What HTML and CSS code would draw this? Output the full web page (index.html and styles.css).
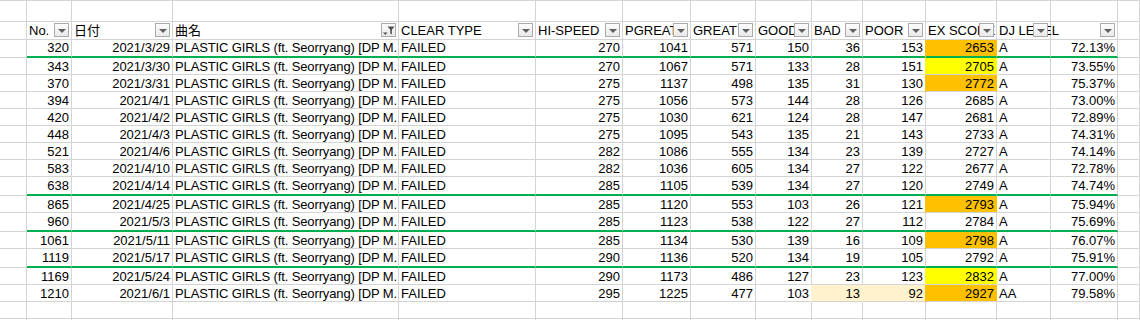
FILE: index.html
```html
<!DOCTYPE html>
<html lang="ja">
<head>
<meta charset="utf-8">
<title>PLASTIC GIRLS 記録</title>
<link rel="stylesheet" href="styles.css">
</head>
<body>
<div class="sheet">
  <div class="row top"><div class="c"></div><div class="c"></div><div class="c"></div><div class="c"></div><div class="c"></div><div class="c"></div><div class="c"></div><div class="c"></div><div class="c"></div><div class="c"></div><div class="c"></div><div class="c"></div><div class="c"></div><div class="c"></div><div class="c"></div></div>
  <div class="row head">
    <div class="c"></div>
    <div class="c h">No.<span class="fb"></span></div>
    <div class="c h">日付<span class="fb"></span></div>
    <div class="c h">曲名<span class="fb on"><svg width="13" height="12" viewBox="0 0 13 12"><path d="M1 8.5h4.5L3.25 11z"/><path d="M5.5 2.5h7l-2.6 3.2v4.8L8.3 9.4V5.7z"/></svg></span></div>
    <div class="c h">CLEAR TYPE<span class="fb"></span></div>
    <div class="c h">HI-SPEED<span class="fb"></span></div>
    <div class="c h">PGREAT<span class="fb"></span></div>
    <div class="c h">GREAT<span class="fb"></span></div>
    <div class="c h">GOOD<span class="fb"></span></div>
    <div class="c h">BAD<span class="fb"></span></div>
    <div class="c h">POOR<span class="fb"></span></div>
    <div class="c h">EX SCORE<span class="fb"></span></div>
    <div class="c h over">DJ LEVEL<span class="fb"></span></div>
    <div class="c h"><span class="fb"></span></div>
    <div class="c"></div>
  </div>

  <div class="row g"><div class="c"></div><div class="c n">320</div><div class="c n">2021/3/29</div><div class="c tt">PLASTIC GIRLS (ft. Seorryang) [DP M.</div><div class="c">FAILED</div><div class="c n">270</div><div class="c n">1041</div><div class="c n">571</div><div class="c n">150</div><div class="c n">36</div><div class="c n">153</div><div class="c n or">2653</div><div class="c">A</div><div class="c n">72.13%</div><div class="c"></div></div>
  <div class="row"><div class="c"></div><div class="c n">343</div><div class="c n">2021/3/30</div><div class="c tt">PLASTIC GIRLS (ft. Seorryang) [DP M.</div><div class="c">FAILED</div><div class="c n">270</div><div class="c n">1067</div><div class="c n">571</div><div class="c n">133</div><div class="c n">28</div><div class="c n">151</div><div class="c n ye">2705</div><div class="c">A</div><div class="c n">73.55%</div><div class="c"></div></div>
  <div class="row"><div class="c"></div><div class="c n">370</div><div class="c n">2021/3/31</div><div class="c tt">PLASTIC GIRLS (ft. Seorryang) [DP M.</div><div class="c">FAILED</div><div class="c n">275</div><div class="c n">1137</div><div class="c n">498</div><div class="c n">135</div><div class="c n">31</div><div class="c n">130</div><div class="c n or">2772</div><div class="c">A</div><div class="c n">75.37%</div><div class="c"></div></div>
  <div class="row"><div class="c"></div><div class="c n">394</div><div class="c n">2021/4/1</div><div class="c tt">PLASTIC GIRLS (ft. Seorryang) [DP M.</div><div class="c">FAILED</div><div class="c n">275</div><div class="c n">1056</div><div class="c n">573</div><div class="c n">144</div><div class="c n">28</div><div class="c n">126</div><div class="c n">2685</div><div class="c">A</div><div class="c n">73.00%</div><div class="c"></div></div>
  <div class="row"><div class="c"></div><div class="c n">420</div><div class="c n">2021/4/2</div><div class="c tt">PLASTIC GIRLS (ft. Seorryang) [DP M.</div><div class="c">FAILED</div><div class="c n">275</div><div class="c n">1030</div><div class="c n">621</div><div class="c n">124</div><div class="c n">28</div><div class="c n">147</div><div class="c n">2681</div><div class="c">A</div><div class="c n">72.89%</div><div class="c"></div></div>
  <div class="row"><div class="c"></div><div class="c n">448</div><div class="c n">2021/4/3</div><div class="c tt">PLASTIC GIRLS (ft. Seorryang) [DP M.</div><div class="c">FAILED</div><div class="c n">275</div><div class="c n">1095</div><div class="c n">543</div><div class="c n">135</div><div class="c n">21</div><div class="c n">143</div><div class="c n">2733</div><div class="c">A</div><div class="c n">74.31%</div><div class="c"></div></div>
  <div class="row"><div class="c"></div><div class="c n">521</div><div class="c n">2021/4/6</div><div class="c tt">PLASTIC GIRLS (ft. Seorryang) [DP M.</div><div class="c">FAILED</div><div class="c n">282</div><div class="c n">1086</div><div class="c n">555</div><div class="c n">134</div><div class="c n">23</div><div class="c n">139</div><div class="c n">2727</div><div class="c">A</div><div class="c n">74.14%</div><div class="c"></div></div>
  <div class="row"><div class="c"></div><div class="c n">583</div><div class="c n">2021/4/10</div><div class="c tt">PLASTIC GIRLS (ft. Seorryang) [DP M.</div><div class="c">FAILED</div><div class="c n">282</div><div class="c n">1036</div><div class="c n">605</div><div class="c n">134</div><div class="c n">27</div><div class="c n">122</div><div class="c n">2677</div><div class="c">A</div><div class="c n">72.78%</div><div class="c"></div></div>
  <div class="row g"><div class="c"></div><div class="c n">638</div><div class="c n">2021/4/14</div><div class="c tt">PLASTIC GIRLS (ft. Seorryang) [DP M.</div><div class="c">FAILED</div><div class="c n">285</div><div class="c n">1105</div><div class="c n">539</div><div class="c n">134</div><div class="c n">27</div><div class="c n">120</div><div class="c n">2749</div><div class="c">A</div><div class="c n">74.74%</div><div class="c"></div></div>
  <div class="row"><div class="c"></div><div class="c n">865</div><div class="c n">2021/4/25</div><div class="c tt">PLASTIC GIRLS (ft. Seorryang) [DP M.</div><div class="c">FAILED</div><div class="c n">285</div><div class="c n">1120</div><div class="c n">553</div><div class="c n">103</div><div class="c n">26</div><div class="c n">121</div><div class="c n or">2793</div><div class="c">A</div><div class="c n">75.94%</div><div class="c"></div></div>
  <div class="row g"><div class="c"></div><div class="c n">960</div><div class="c n">2021/5/3</div><div class="c tt">PLASTIC GIRLS (ft. Seorryang) [DP M.</div><div class="c">FAILED</div><div class="c n">285</div><div class="c n">1123</div><div class="c n">538</div><div class="c n">122</div><div class="c n">27</div><div class="c n">112</div><div class="c n">2784</div><div class="c">A</div><div class="c n">75.69%</div><div class="c"></div></div>
  <div class="row"><div class="c"></div><div class="c n">1061</div><div class="c n">2021/5/11</div><div class="c tt">PLASTIC GIRLS (ft. Seorryang) [DP M.</div><div class="c">FAILED</div><div class="c n">285</div><div class="c n">1134</div><div class="c n">530</div><div class="c n">139</div><div class="c n">16</div><div class="c n">109</div><div class="c n or">2798</div><div class="c">A</div><div class="c n">76.07%</div><div class="c"></div></div>
  <div class="row g"><div class="c"></div><div class="c n">1119</div><div class="c n">2021/5/17</div><div class="c tt">PLASTIC GIRLS (ft. Seorryang) [DP M.</div><div class="c">FAILED</div><div class="c n">290</div><div class="c n">1136</div><div class="c n">520</div><div class="c n">134</div><div class="c n">19</div><div class="c n">105</div><div class="c n">2792</div><div class="c">A</div><div class="c n">75.91%</div><div class="c"></div></div>
  <div class="row"><div class="c"></div><div class="c n">1169</div><div class="c n">2021/5/24</div><div class="c tt">PLASTIC GIRLS (ft. Seorryang) [DP M.</div><div class="c">FAILED</div><div class="c n">290</div><div class="c n">1173</div><div class="c n">486</div><div class="c n">127</div><div class="c n">23</div><div class="c n">123</div><div class="c n ye">2832</div><div class="c">A</div><div class="c n">77.00%</div><div class="c"></div></div>
  <div class="row"><div class="c"></div><div class="c n">1210</div><div class="c n">2021/6/1</div><div class="c tt">PLASTIC GIRLS (ft. Seorryang) [DP M.</div><div class="c">FAILED</div><div class="c n">295</div><div class="c n">1225</div><div class="c n">477</div><div class="c n">103</div><div class="c n be">13</div><div class="c n be">92</div><div class="c n or">2927</div><div class="c">AA</div><div class="c n">79.58%</div><div class="c"></div></div>

  <div class="row"><div class="c"></div><div class="c"></div><div class="c"></div><div class="c"></div><div class="c"></div><div class="c"></div><div class="c"></div><div class="c"></div><div class="c"></div><div class="c"></div><div class="c"></div><div class="c"></div><div class="c"></div><div class="c"></div><div class="c"></div></div>
  <div class="row"><div class="c"></div><div class="c"></div><div class="c"></div><div class="c"></div><div class="c"></div><div class="c"></div><div class="c"></div><div class="c"></div><div class="c"></div><div class="c"></div><div class="c"></div><div class="c"></div><div class="c"></div><div class="c"></div><div class="c"></div></div>
</div>
</body>
</html>
```

FILE: styles.css
```css
html, body {
  margin: 0;
  padding: 0;
  background: #ffffff;
}

.sheet {
  width: 1140px;
  height: 320px;
  overflow: hidden;
  border-top: 1px solid #d4d4d4;
  font-family: "Liberation Sans", Arial, "Noto Sans CJK JP", sans-serif;
  font-size: 13px;
  color: #000000;
}

.row {
  display: grid;
  grid-template-columns: 27px 45px 101px 226px 137px 87px 68px 65px 56px 51px 63px 71px 54px 67px 1fr;
  height: 17px;
}

.row.top {
  height: 21px;
}

.c {
  box-sizing: border-box;
  border-right: 1px solid #d4d4d4;
  border-bottom: 1px solid #d4d4d4;
  padding: 1px 2px 0;
  line-height: 16px;
  white-space: nowrap;
  overflow: hidden;
}

.c.n {
  text-align: right;
}

.c.tt {
  letter-spacing: -0.13px;
  padding-left: 2px;
  padding-right: 0;
}

/* header cells */
.c.h {
  position: relative;
  overflow: visible;
}

.c.h.over {
  z-index: 1;
}

.fb {
  position: absolute;
  right: 2px;
  top: 1px;
  width: 15px;
  height: 14px;
  box-sizing: border-box;
  border: 1px solid #ababab;
  background: linear-gradient(#fdfdfd, #e9e9e9);
  display: flex;
  align-items: center;
  justify-content: center;
  z-index: 2;
}

.fb::after {
  content: "";
  display: block;
  width: 0;
  height: 0;
  margin-top: 1px;
  border-left: 4px solid transparent;
  border-right: 4px solid transparent;
  border-top: 4px solid #606060;
}

.fb.on::after {
  display: none;
}

.fb svg {
  display: block;
  fill: #505050;
}

/* green separator rows */
.row.g {
  height: 19px;
}

.row.g .c:not(:first-child):not(:last-child) {
  border-bottom: 2px solid #00b050;
}

/* fills */
.c.or {
  background: #ffc000;
  border-right-color: #ffc000;
  box-shadow: -1px 0 0 #ffc000;
}

.c.ye {
  background: #ffff00;
  border-right-color: #ffff00;
  box-shadow: -1px 0 0 #ffff00;
}

.c.be {
  background: #fff2cc;
  border-right-color: #fff2cc;
  box-shadow: -1px 0 0 #fff2cc;
}
```
